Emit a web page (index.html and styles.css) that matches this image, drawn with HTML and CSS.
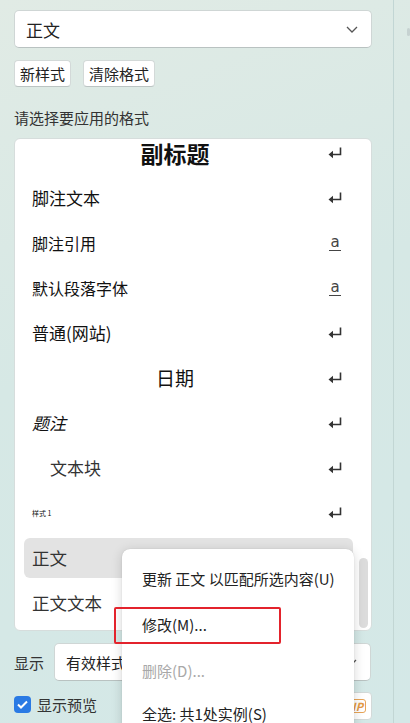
FILE: index.html
```html
<!DOCTYPE html>
<html>
<head>
    <title>样式</title>
    <link rel="stylesheet" href="styles.css">
</head>
<body>
    <div class="page">
        <div class="panel">
            <div class="select">
                <span class="select-text big">正文</span>
                <svg class="chevron" width="12" height="7" viewBox="0 0 12 7"><polyline points="1,1 6,6 11,1" /></svg>
            </div>

            <div class="btn-row">
                <button class="btn">新样式</button>
                <button class="btn">清除格式</button>
            </div>

            <div class="label">请选择要应用的格式</div>

            <div class="list-box">
                <div class="list">
                    <div class="item">
                        <span class="name subtitle">副标题</span>
                        <svg class="icon-return" width="14" height="12" viewBox="0 0 14 12"><path d="M12.5 0.5 V7.5 H4" /><polygon points="0.5,7.5 5,3.8 5,11.2" /></svg>
                    </div>
                    <div class="item">
                        <span class="name">脚注文本</span>
                        <svg class="icon-return" width="14" height="12" viewBox="0 0 14 12"><path d="M12.5 0.5 V7.5 H4" /><polygon points="0.5,7.5 5,3.8 5,11.2" /></svg>
                    </div>
                    <div class="item">
                        <span class="name small">脚注引用</span>
                        <span class="icon-char">a</span>
                    </div>
                    <div class="item">
                        <span class="name small">默认段落字体</span>
                        <span class="icon-char">a</span>
                    </div>
                    <div class="item">
                        <span class="name">普通(网站)</span>
                        <svg class="icon-return" width="14" height="12" viewBox="0 0 14 12"><path d="M12.5 0.5 V7.5 H4" /><polygon points="0.5,7.5 5,3.8 5,11.2" /></svg>
                    </div>
                    <div class="item">
                        <span class="name date">日期</span>
                        <svg class="icon-return" width="14" height="12" viewBox="0 0 14 12"><path d="M12.5 0.5 V7.5 H4" /><polygon points="0.5,7.5 5,3.8 5,11.2" /></svg>
                    </div>
                    <div class="item">
                        <span class="name caption">题注</span>
                        <svg class="icon-return" width="14" height="12" viewBox="0 0 14 12"><path d="M12.5 0.5 V7.5 H4" /><polygon points="0.5,7.5 5,3.8 5,11.2" /></svg>
                    </div>
                    <div class="item">
                        <span class="name block">文本块</span>
                        <svg class="icon-return" width="14" height="12" viewBox="0 0 14 12"><path d="M12.5 0.5 V7.5 H4" /><polygon points="0.5,7.5 5,3.8 5,11.2" /></svg>
                    </div>
                    <div class="item">
                        <span class="name tiny">样式 1</span>
                        <svg class="icon-return" width="14" height="12" viewBox="0 0 14 12"><path d="M12.5 0.5 V7.5 H4" /><polygon points="0.5,7.5 5,3.8 5,11.2" /></svg>
                    </div>
                    <div class="item selected">
                        <span class="name body-text">正文</span>
                    </div>
                    <div class="item">
                        <span class="name body-text">正文文本</span>
                    </div>
                </div>
                <div class="scroll-track">
                    <div class="scroll-thumb"></div>
                </div>
            </div>

            <div class="show-row">
                <span class="show-label">显示</span>
                <div class="select select-small">
                    <span class="select-text">有效样式</span>
                    <svg class="chevron" width="12" height="7" viewBox="0 0 12 7"><polyline points="1,1 6,6 11,1" /></svg>
                </div>
            </div>

            <div class="preview-row">
                <span class="checkbox">
                    <svg width="11" height="9" viewBox="0 0 11 9"><polyline points="1,4.5 4,7.5 10,1.5" /></svg>
                </span>
                <span class="preview-label">显示预览</span>
                <span class="vip-btn"><span class="vip">VIP</span></span>
            </div>
        </div>
        <div class="side">
            <div class="side-thumb"></div>
        </div>

        <div class="menu">
            <div class="menu-item">更新 正文 以匹配所选内容(U)</div>
            <div class="menu-item">修改(M)...</div>
            <div class="menu-item disabled">删除(D)...</div>
            <div class="menu-item">全选: 共1处实例(S)</div>
        </div>
        <div class="mark"></div>
    </div>
</body>
</html>
```

FILE: styles.css
```css
body {
    margin: 0;
    font-family: "Noto Sans CJK SC", "Noto Sans", sans-serif;
    color: #222;
    overflow: hidden;
}
.page {
    position: relative;
    display: flex;
    width: 410px;
    height: 723px;
    overflow: hidden;
    background: linear-gradient(160deg, #e1ebe5 0%, #d6e8e5 45%, #d4e8e7 100%);
}
.panel {
    box-sizing: border-box;
    width: 394px;
    padding: 10px 21px 0 14px;
    border-right: 1px solid #c2d6d4;
}
.side {
    flex: 1;
    display: flex;
    justify-content: flex-end;
    padding-top: 28px;
}
.side-thumb {
    width: 3px;
    height: 8px;
    border-radius: 2px;
    background: #c6d2d1;
}

.select {
    box-sizing: border-box;
    height: 38px;
    display: flex;
    align-items: center;
    padding: 0 13px 0 11px;
    background: #fff;
    border: 1px solid #cfd6d5;
    border-bottom-color: #b9c2c1;
    border-radius: 5px;
}
.select-text {
    flex: 1;
    font-size: 15px;
    color: #222;
}
.select-text.big {
    font-size: 17px;
}
.chevron polyline {
    fill: none;
    stroke: #555;
    stroke-width: 1.3;
}

.btn-row {
    display: flex;
    gap: 12px;
    margin-top: 12px;
}
.btn {
    box-sizing: border-box;
    height: 27px;
    padding: 0 5px;
    font-family: inherit;
    font-size: 15px;
    color: #222;
    background: #fff;
    border: 1px solid #d3d9d8;
    border-bottom-color: #bcc4c3;
    border-radius: 4px;
}

.label {
    margin-top: 21px;
    font-size: 15px;
    line-height: 20px;
    color: #333;
}

.list-box {
    box-sizing: border-box;
    display: flex;
    height: 493px;
    margin-top: 10px;
    background: #fff;
    border: 1px solid #d6dddc;
    border-radius: 6px;
    overflow: hidden;
}
.list {
    flex: 1;
    display: flex;
    flex-direction: column;
    gap: 5px;
    margin-top: -6px;
    padding-left: 9px;
}
.item {
    flex: none;
    height: 40px;
    display: flex;
    align-items: center;
    padding: 0 11px 0 8px;
    border-radius: 6px;
    color: #111;
}
.item.selected {
    background: #e3e3e3;
}
.name {
    flex: 1;
    margin-right: 10px;
    font-size: 17px;
    line-height: 24px;
    white-space: nowrap;
}
.name.small {
    font-size: 16px;
}
.name.subtitle {
    font-size: 23px;
    font-weight: 700;
    text-align: center;
}
.name.date {
    font-size: 19px;
    text-align: center;
}
.name.caption {
    font-style: italic;
}
.name.block {
    padding-left: 18px;
    color: #333;
}
.name.tiny {
    font-size: 7px;
}
.name.body-text {
    font-size: 17.5px;
    color: #333;
}
.icon-return path {
    fill: none;
    stroke: #333;
    stroke-width: 1.6;
}
.icon-return polygon {
    fill: #333;
}
.icon-char {
    width: 12px;
    font-family: "DejaVu Sans", sans-serif;
    font-size: 15px;
    line-height: 13px;
    text-align: center;
    color: #444;
    border-bottom: 1.3px solid #444;
    padding-bottom: 1px;
    margin-right: 1px;
}

.scroll-track {
    width: 9px;
    display: flex;
    flex-direction: column;
    justify-content: flex-end;
    padding: 0 3px 2px 6px;
}
.scroll-thumb {
    height: 70px;
    border-radius: 5px;
    background: #dcdcdc;
}

.show-row {
    display: flex;
    align-items: center;
    gap: 10px;
    margin-top: 12px;
}
.show-label {
    font-size: 15px;
    color: #333;
}
.select-small {
    flex: 1;
    margin-right: 1px;
}

.preview-row {
    display: flex;
    align-items: center;
    height: 28px;
    margin-top: 11px;
}
.checkbox {
    width: 17px;
    height: 17px;
    border-radius: 4px;
    background: #2a7ae4;
    display: flex;
    align-items: center;
    justify-content: center;
    margin-top: -3px;
}
.checkbox polyline {
    fill: none;
    stroke: #fff;
    stroke-width: 2;
}
.preview-label {
    flex: 1;
    margin-left: 6px;
    font-size: 15px;
    color: #333;
    margin-top: -4px;
}
.vip-btn {
    box-sizing: border-box;
    width: 38px;
    height: 28px;
    display: flex;
    align-items: center;
    justify-content: flex-end;
    padding-right: 5px;
    background: #fff;
    border: 1px solid #d3d9d8;
    border-radius: 4px;
}
.vip {
    font-size: 11px;
    font-weight: 700;
    font-style: italic;
    line-height: 12px;
    color: #e59a45;
    border: 1.5px solid #e8a558;
    border-radius: 3px;
    padding: 0 2px;
}

.menu {
    position: absolute;
    left: 122px;
    top: 549px;
    width: 232px;
    height: 200px;
    padding-top: 7px;
    box-sizing: border-box;
    background: #fff;
    border-radius: 8px;
    box-shadow: 0 2px 12px rgba(0, 0, 0, 0.16), 0 0 1px rgba(0, 0, 0, 0.2);
}
.menu-item {
    height: 46px;
    line-height: 46px;
    padding-left: 20px;
    font-size: 15px;
    color: #222;
    white-space: nowrap;
}
.menu-item:last-child {
    height: 40px;
    line-height: 40px;
}
.menu-item.disabled {
    color: #a8a8a8;
}
.mark {
    position: absolute;
    left: 114px;
    top: 607px;
    width: 163px;
    height: 33px;
    border: 2px solid #e3232c;
    border-radius: 2px;
}
```
